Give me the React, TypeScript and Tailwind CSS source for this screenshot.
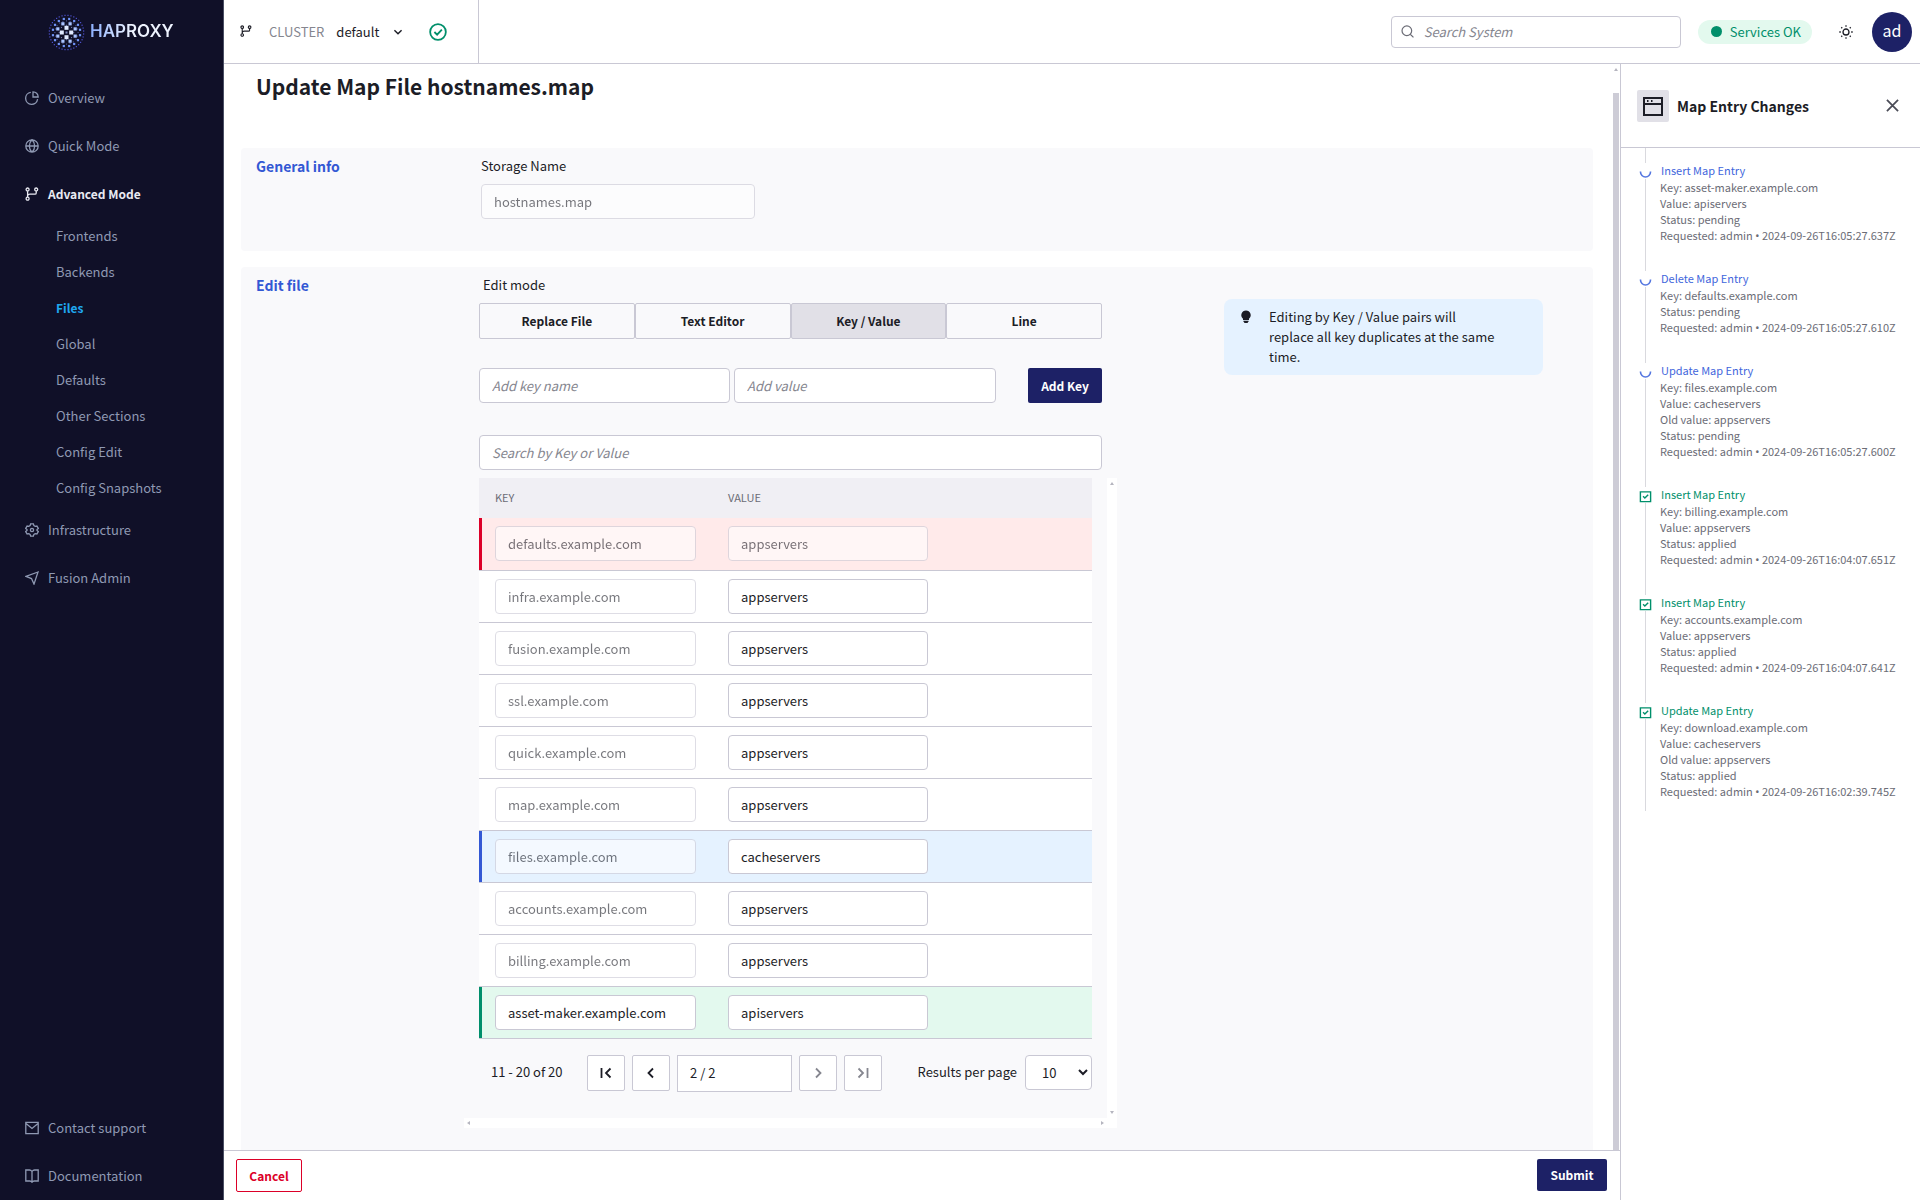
import { useState } from "react";
import clsx from "clsx";

const subItems = ["Frontends", "Backends", "Files", "Global", "Defaults", "Other Sections", "Config Edit", "Config Snapshots"];

const modes = ["Replace File", "Text Editor", "Key / Value", "Line"];

type Row = { key: string; value: string; state?: "deleted" | "updated" | "inserted" };

const rows: Row[] = [
  { key: "defaults.example.com", value: "appservers", state: "deleted" },
  { key: "infra.example.com", value: "appservers" },
  { key: "fusion.example.com", value: "appservers" },
  { key: "ssl.example.com", value: "appservers" },
  { key: "quick.example.com", value: "appservers" },
  { key: "map.example.com", value: "appservers" },
  { key: "files.example.com", value: "cacheservers", state: "updated" },
  { key: "accounts.example.com", value: "appservers" },
  { key: "billing.example.com", value: "appservers" },
  { key: "asset-maker.example.com", value: "apiservers", state: "inserted" },
];

const changes = [
  { title: "Insert Map Entry", pending: true, lines: ["Key: asset-maker.example.com", "Value: apiservers", "Status: pending"], time: "2024-09-26T16:05:27.637Z" },
  { title: "Delete Map Entry", pending: true, lines: ["Key: defaults.example.com", "Status: pending"], time: "2024-09-26T16:05:27.610Z" },
  { title: "Update Map Entry", pending: true, lines: ["Key: files.example.com", "Value: cacheservers", "Old value: appservers", "Status: pending"], time: "2024-09-26T16:05:27.600Z" },
  { title: "Insert Map Entry", pending: false, lines: ["Key: billing.example.com", "Value: appservers", "Status: applied"], time: "2024-09-26T16:04:07.651Z" },
  { title: "Insert Map Entry", pending: false, lines: ["Key: accounts.example.com", "Value: appservers", "Status: applied"], time: "2024-09-26T16:04:07.641Z" },
  { title: "Update Map Entry", pending: false, lines: ["Key: download.example.com", "Value: cacheservers", "Old value: appservers", "Status: applied"], time: "2024-09-26T16:02:39.745Z" },
];

const inputClass =
  "h-[35px] rounded-[4px] border border-[#c9c8d4] bg-white px-3 text-[13px] leading-5 text-[#1c1d26] placeholder:italic placeholder:text-[#85868f] focus:outline-none focus:border-[#3358d4] disabled:opacity-60";

// Rings of square pixels, fading towards the rim
const rings = [
  { r: 4.7, count: 4, turn: 0, size: 4, fill: "#e1ebff" },
  { r: 7.2, count: 8, turn: 0, size: 1, fill: "#7f8cc0" },
  { r: 9.4, count: 8, turn: 22.5, size: 3.2, fill: "#a9c3ff" },
  { r: 11.6, count: 20, turn: 0, size: 1, fill: "#56609c" },
  { r: 13.8, count: 16, turn: 11.25, size: 2.2, fill: "#6f93f5" },
  { r: 17.2, count: 36, turn: 5, size: 1.2, fill: "#4f52d0" },
];

function LogoMark() {
  return (
    <svg width="37" height="37" viewBox="0 0 37 37" aria-hidden="true">
      {rings.map((ring) =>
        Array.from({ length: ring.count }, (_, i) => {
          const a = ((ring.turn + (360 / ring.count) * i) * Math.PI) / 180;
          return (
            <rect
              key={`${ring.r}-${i}`}
              x={18.5 + ring.r * Math.cos(a) - ring.size / 2}
              y={18.5 + ring.r * Math.sin(a) - ring.size / 2}
              width={ring.size}
              height={ring.size}
              fill={ring.fill}
            />
          );
        })
      )}
      <rect x="17.5" y="17.5" width="2" height="2" fill="#7f8cc0" />
    </svg>
  );
}

// All line icons live on a 14x14 grid
const icons = {
  pie: "M5.8 1.4A6 6 0 1 0 12.6 8.2M8 .8v5.2h5.2A5.2 5.2 0 0 0 8 .8z",
  globe: "M7 .8a6.2 6.2 0 1 0 0 12.4A6.2 6.2 0 0 0 7 .8zM7 .8c-3.6 3.6-3.6 8.800 0 12.400M7 .8c3.6 3.6 3.6 8.800 0 12.400M.8 7h12.4",
  branch:
    "M2.6 1a1.5 1.5 0 1 0 0 3 1.5 1.5 0 0 0 0-3zM2.6 10.2a1.5 1.5 0 1 0 0 3 1.5 1.5 0 0 0 0-3zM11.2 1a1.5 1.5 0 1 0 0 3 1.5 1.5 0 0 0 0-3zM2.6 4v6.2M11.2 4v2q0 1.2-1.2 1.2H5q-2.4 0-2.4 2",
  gear: "M5.6.9h2.8l.5 1.700 1.300.8 1.700-.4 1.400 2.400L12 6.600v.8l1.300 1.200-1.400 2.400-1.700-.4-1.300.8-.5 1.700H5.600l-.5-1.700-1.300-.8-1.700.4L.7 8.600 2 7.400v-.8L.7 5.400 2.100 3l1.700.4 1.300-.8zM7 5.400a1.600 1.600 0 1 0 0 3.200 1.600 1.600 0 0 0 0-3.200z",
  send: "M13 1 .9 5.4l5.6 2.2 2.5 5.5z",
  mail: "M.8 1.3h12.4v11.4H.8zM1 2.5l6 5 6-5",
  book: "M7 2.5Q6 1 4.500 1H.8v11h3.900Q6.500 12 7 13.500M7 2.500Q8 1 9.500 1h3.700v11H9.300Q7.500 12 7 13.500zV13.500",
  check: "M7 .9a6.1 6.1 0 1 0 0 12.2A6.1 6.1 0 0 0 7 .9zM4.2 7l2.100 2.100 3.700-4",
  checkSquare: "M1.5 2h11v10.5h-11zM4.4 6.8l1.900 1.900 3.600-3.700",
  search: "M6.3 1a5.2 5.2 0 1 0 0 10.4A5.2 5.2 0 0 0 6.3 1zM10 10l3.4 3.4",
  close: "M1 1l12 12M13 1 1 13",
  down: "M2 4.5l5 5 5-5",
  sun: "M7 4a3 3 0 1 0 0 6 3 3 0 0 0 0-6zM7 .3v1.500M7 12.200v1.500M.3 7h1.500M12.200 7h1.500M2.300 2.300l.9.9M10.800 10.800l.9.9M2.300 11.700l.9-.9M10.800 3.200l.9-.9",
};

function Icon({ name, size = 14, stroke = 1.3, className }: { name: keyof typeof icons; size?: number; stroke?: number; className?: string }) {
  return (
    <svg
      width={size}
      height={size}
      viewBox="0 0 14 14"
      fill="none"
      stroke="currentColor"
      strokeWidth={stroke}
      className={clsx("shrink-0", className)}
      aria-hidden="true"
    >
      <path d={icons[name]} />
    </svg>
  );
}

function NavItem({ icon, label, active }: { icon: keyof typeof icons; label: string; active?: boolean }) {
  return (
    <a href="#" className={clsx("flex h-12 items-center gap-[9px] pl-[25px]", active && "text-[12px] font-bold text-[#e9eaf2]")}>
      <Icon name={icon} />
      {label}
    </a>
  );
}

function Sidebar() {
  return (
    <aside className="flex w-56 shrink-0 flex-col border-r border-[#4b5064] bg-[#101028] text-[13px] text-[#8f99b3]">
      <a href="#" className="flex h-16 items-center gap-[5px] pl-12">
        <LogoMark />
        <span className="bg-linear-to-r from-[#8db0ff] to-[#eef3ff] to-50% bg-clip-text font-['Inter'] text-[17px] font-semibold text-transparent">
          HAPROXY
        </span>
      </a>
      <nav className="flex flex-1 flex-col pt-[10px]">
        <NavItem icon="pie" label="Overview" />
        <NavItem icon="globe" label="Quick Mode" />
        <NavItem icon="branch" label="Advanced Mode" active />
        {subItems.map((item) => (
          <a
            key={item}
            href="#"
            className={clsx("flex h-9 items-center pl-14", item === "Files" && "text-[12px] font-bold text-[#1fa8f0]")}
          >
            {item}
          </a>
        ))}
        <NavItem icon="gear" label="Infrastructure" />
        <NavItem icon="send" label="Fusion Admin" />
        <div className="mt-auto">
          <NavItem icon="mail" label="Contact support" />
          <NavItem icon="book" label="Documentation" />
        </div>
      </nav>
    </aside>
  );
}

function TopBar() {
  return (
    <header className="flex h-16 shrink-0 items-center border-b border-[#c9c8d4] pr-2 text-[13px]">
      <div className="flex h-full w-[255px] items-center border-r border-[#c9c8d4] pl-4">
        <Icon name="branch" size={12} className="mb-0.5" />
        <span className="ml-[17px] text-[#85868f]">CLUSTER</span>
        <button type="button" className="ml-3 flex items-center gap-[14px]">
          default
          <Icon name="down" size={10} stroke={2} />
        </button>
        <Icon name="check" size={18} stroke={1.4} className="ml-[26px] text-[#008f6b]" />
      </div>
      <label className="ml-auto flex h-8 w-[290px] items-center gap-[10px] rounded-[4px] border border-[#c9c8d4] px-[9px]">
        <Icon name="search" size={13} className="text-[#6b6c76]" />
        <input
          type="text"
          aria-label="Search System"
          placeholder="Search System"
          className="min-w-0 flex-1 placeholder:italic placeholder:text-[#85868f] focus:outline-none"
        />
      </label>
      <div className="ml-[17px] flex h-6 items-center gap-2 rounded-full bg-[#e3f9ee] pr-[11px] pl-[13px] text-[#008f6b]">
        <span className="size-[11px] rounded-full bg-[#008f6b]" />
        Services OK
      </div>
      <button type="button" aria-label="Toggle theme" className="ml-[27px]">
        <Icon name="sun" />
      </button>
      <button type="button" className="ml-[19px] size-10 rounded-full bg-[#1d2166] pb-1 text-[16px] text-white">
        ad
      </button>
    </header>
  );
}

function Arrow({ dir }: { dir: "up" | "down" | "left" | "right" }) {
  const paths = {
    up: "M0 3h4L2 0z",
    down: "M0 1h4L2 4z",
    left: "M3 0v4L0 2z",
    right: "M1 0v4l3-2z",
  };
  return (
    <svg width="4" height="4" viewBox="0 0 4 4" fill="#b5b5bf">
      <path d={paths[dir]} />
    </svg>
  );
}

function EntryTable() {
  return (
    <table className="w-full border-collapse text-left">
      <thead>
        <tr className="h-10 bg-[#f0eff4] text-[11px] text-[#6b6c76]">
          <th scope="col" className="w-[233px] pb-0.5 pl-4 font-normal">KEY</th>
          <th scope="col" className="pb-0.5 pl-4 font-normal">VALUE</th>
        </tr>
      </thead>
      <tbody>
        {rows.map((row) => (
          <tr
            key={row.key}
            className={clsx(
              "h-[52px] border-b border-[#c9c8d4]",
              !row.state && "bg-white",
              row.state === "deleted" && "bg-[#ffeaea] shadow-[inset_3px_0_0_#dc0028]",
              row.state === "updated" && "bg-[#e5f2ff] shadow-[inset_3px_0_0_#3358d4]",
              row.state === "inserted" && "bg-[#e3f9ee] shadow-[inset_3px_0_0_#008f6b]"
            )}
          >
            <td className="py-2 pl-4">
              <input
                aria-label="Key"
                defaultValue={row.key}
                disabled={row.state !== "inserted"}
                className={clsx(inputClass, "block w-[201px]")}
              />
            </td>
            <td className="py-2 pl-4">
              <input
                aria-label="Value"
                defaultValue={row.value}
                disabled={row.state === "deleted"}
                className={clsx(inputClass, "block w-[200px]")}
              />
            </td>
          </tr>
        ))}
      </tbody>
    </table>
  );
}

function PageButton({ label, path, disabled }: { label: string; path: string; disabled?: boolean }) {
  return (
    <button
      type="button"
      aria-label={label}
      disabled={disabled}
      className="flex h-9 w-[38px] items-center justify-center rounded-[2px] border border-[#c9c8d4] bg-white text-[#1c1d26] disabled:text-[#85868f]"
    >
      <svg width="12" height="12" viewBox="0 0 12 12" fill="none" stroke="currentColor" strokeWidth="1.8">
        <path d={path} />
      </svg>
    </button>
  );
}

function Pagination() {
  return (
    <div className="mt-4 flex items-start pl-3 text-[13px]">
      <span className="w-24 leading-[34px]">11 - 20 of 20</span>
      <div className="flex gap-[7px]">
        <PageButton label="First page" path="M1.5 1v10M10.5 1.5 6 6l4.5 4.5" />
        <PageButton label="Previous page" path="M8 1.5 3.5 6 8 10.5" />
        <input
          aria-label="Page"
          defaultValue="2 / 2"
          className="h-[37px] w-[115px] border border-[#c9c8d4] bg-white px-3 pb-0.5 focus:outline-none"
        />
        <PageButton label="Next page" path="M4 1.5 8.5 6 4 10.5" disabled />
        <PageButton label="Last page" path="M1.5 1.5 6 6l-4.5 4.5M10.5 1v10" disabled />
      </div>
      <label className="ml-auto flex items-center gap-2">
        Results per page
        <select defaultValue="10" className="h-[35px] w-[67px] rounded-[4px] border border-[#c9c8d4] bg-white pl-3 focus:outline-none">
          <option>10</option>
          <option>20</option>
          <option>50</option>
        </select>
      </label>
    </div>
  );
}

function EditFile() {
  const [mode, setMode] = useState("Key / Value");

  return (
    <section className="flex flex-1 rounded-t-[4px] bg-[#f9f9fb] pl-[15px]">
      <h2 className="w-[208px] shrink-0 pt-2 text-[14px] leading-5 font-bold text-[#3358d4]">Edit file</h2>
      <div className="w-[653px] shrink-0 pt-2">
        <div className="mr-[15px] ml-[15px]">
          <p className="pl-1 text-[13px] leading-5">Edit mode</p>
          <div className="mt-2 flex">
            {modes.map((m) => (
              <button
                key={m}
                type="button"
                onClick={() => setMode(m)}
                className={clsx(
                  "h-9 flex-1 rounded-[2px] border border-[#c9c8d4] text-[12px] font-bold",
                  m === mode && "bg-[#e1e0e7]"
                )}
              >
                {m}
              </button>
            ))}
          </div>
          <div className="mt-[29px] flex">
            <input aria-label="Key name" placeholder="Add key name" className={clsx(inputClass, "w-[251px]")} />
            <input aria-label="Value" placeholder="Add value" className={clsx(inputClass, "ml-1 w-[262px]")} />
            <button type="button" className="ml-auto h-[35px] w-[74px] rounded-[2px] bg-[#1d2166] text-[12px] font-bold text-white">
              Add Key
            </button>
          </div>
          <input aria-label="Search by Key or Value" placeholder="Search by Key or Value" className={clsx(inputClass, "mt-8 w-full")} />
        </div>
        <div className="mt-2 flex">
          <div className="min-w-0 flex-1 pr-[15px] pb-[26px] pl-[15px]">
            <EntryTable />
            <Pagination />
          </div>
          <div className="flex w-[10px] flex-col items-center justify-between bg-white py-1">
            <Arrow dir="up" />
            <Arrow dir="down" />
          </div>
        </div>
        <div className="flex h-[10px] items-center justify-between bg-white pr-[13px] pl-[3px]">
          <Arrow dir="left" />
          <Arrow dir="right" />
        </div>
      </div>
      <aside className="mt-8 mr-[50px] ml-auto flex h-[76px] w-[319px] items-start gap-[17px] rounded-[8px] bg-[#e5f2ff] px-4 py-2 text-[13px] leading-5">
        <svg width="12" height="14" viewBox="0 0 12 14" className="mt-[3px] shrink-0" fill="#1c1d26">
          <path d="M6 .5a4.7 4.7 0 0 0-3 8.3V10h6V8.8A4.7 4.7 0 0 0 6 .5zM3.5 10.800h5v1.200H7.800v1H4.200v-1h-.7z" />
        </svg>
        <p className="w-[229px]">Editing by Key / Value pairs will replace all key duplicates at the same time.</p>
      </aside>
    </section>
  );
}

function ChangesPanel() {
  return (
    <aside className="flex w-[300px] shrink-0 flex-col border-l border-[#c9c8d4]">
      <div className="flex h-[84px] shrink-0 items-center border-b border-[#c9c8d4] pr-[21px] pl-4">
        <span className="flex size-8 items-center justify-center rounded-[2px] bg-[#e1e0e7]">
          <svg width="20" height="20" viewBox="0 0 20 20" fill="none" stroke="#1c1d26" strokeWidth="2">
            <rect x="1" y="2" width="18" height="17" />
            <path d="M1 8h18M4 5h1.500M8 5h1.500" />
          </svg>
        </span>
        <h2 className="pt-0.5 pl-2 text-[14px] font-bold">Map Entry Changes</h2>
        <button type="button" aria-label="Close" className="ml-auto text-[#4b4c57]">
          <Icon name="close" size={13} stroke={1.9} />
        </button>
      </div>
      <ol className="flex flex-col pl-4">
        <li className="ml-2 h-[15px] border-l border-[#d9d9de]" />
        {changes.map((c) => (
          <li key={c.time} className="group flex gap-[6px]">
            <div className="flex w-[17px] shrink-0 flex-col items-center">
              <span className="flex h-4 items-end">
                {c.pending ? (
                  <svg width="13" height="14" viewBox="0 0 13 14" fill="none" stroke="#5577e0" strokeWidth="1.6">
                    <path d="M1.5 6.500v.5a5 5 0 0 0 10 0v-.5" />
                  </svg>
                ) : (
                  <Icon name="checkSquare" size={13} stroke={1.5} className="text-[#008f6b]" />
                )}
              </span>
              <span className="w-px flex-1 bg-[#d9d9de]" />
            </div>
            <div className="pb-7 text-[11px] leading-4 text-[#6b6c76] group-last:pb-3">
              <p className={clsx("mb-0.5 pl-px leading-[14px]", c.pending ? "text-[#3f66dc]" : "text-[#008f6b]")}>{c.title}</p>
              {c.lines.map((line) => (
                <p key={line}>{line}</p>
              ))}
              <p className="h-4">
                Requested: admin <span className="font-['Noto_Sans']">•</span> {c.time}
              </p>
            </div>
          </li>
        ))}
      </ol>
    </aside>
  );
}

export default function App() {
  return (
    <div className="flex h-screen bg-white font-['Noto_Sans_CJK_SC',sans-serif] text-[#1c1d26]">
      <Sidebar />
      <div className="flex min-w-0 flex-1 flex-col">
        <TopBar />
        <div className="flex min-h-0 flex-1">
          <div className="flex min-w-0 flex-1 flex-col">
            <div className="flex min-h-0 flex-1">
              <main className="flex min-w-0 flex-1 flex-col overflow-hidden pr-[19px] pl-[17px]">
                <h1 className="mt-[6px] mb-[46px] pl-[15px] text-[21px] leading-8 font-bold">Update Map File hostnames.map</h1>
                <section className="mb-4 flex h-[103px] shrink-0 rounded-[4px] bg-[#f9f9fb] pt-2 pl-[15px]">
                  <h2 className="w-[225px] text-[14px] leading-5 font-bold text-[#3358d4]">General info</h2>
                  <div className="flex flex-col gap-2">
                    <label htmlFor="storage" className="text-[13px] leading-5">Storage Name</label>
                    <input id="storage" disabled defaultValue="hostnames.map" className={clsx(inputClass, "w-[274px]")} />
                  </div>
                </section>
                <EditFile />
              </main>
              <div className="flex w-2 shrink-0 flex-col items-center">
                <span className="flex h-[29px] pt-1">
                  <Arrow dir="up" />
                </span>
                <span className="w-[6px] flex-1 bg-[#cdccd6]" />
              </div>
            </div>
            <footer className="flex h-[50px] shrink-0 items-start justify-between border-t border-[#c9c8d4] pt-2 pr-[13px] pl-3 text-[13px] font-bold">
              <button type="button" className="h-[33px] w-[66px] rounded-[2px] border border-[#dc0028] text-[12px] text-[#dc0028]">
                Cancel
              </button>
              <button type="button" className="h-8 w-[70px] rounded-[2px] bg-[#1d2166] text-[12px] text-white">
                Submit
              </button>
            </footer>
          </div>
          <ChangesPanel />
        </div>
      </div>
    </div>
  );
}
